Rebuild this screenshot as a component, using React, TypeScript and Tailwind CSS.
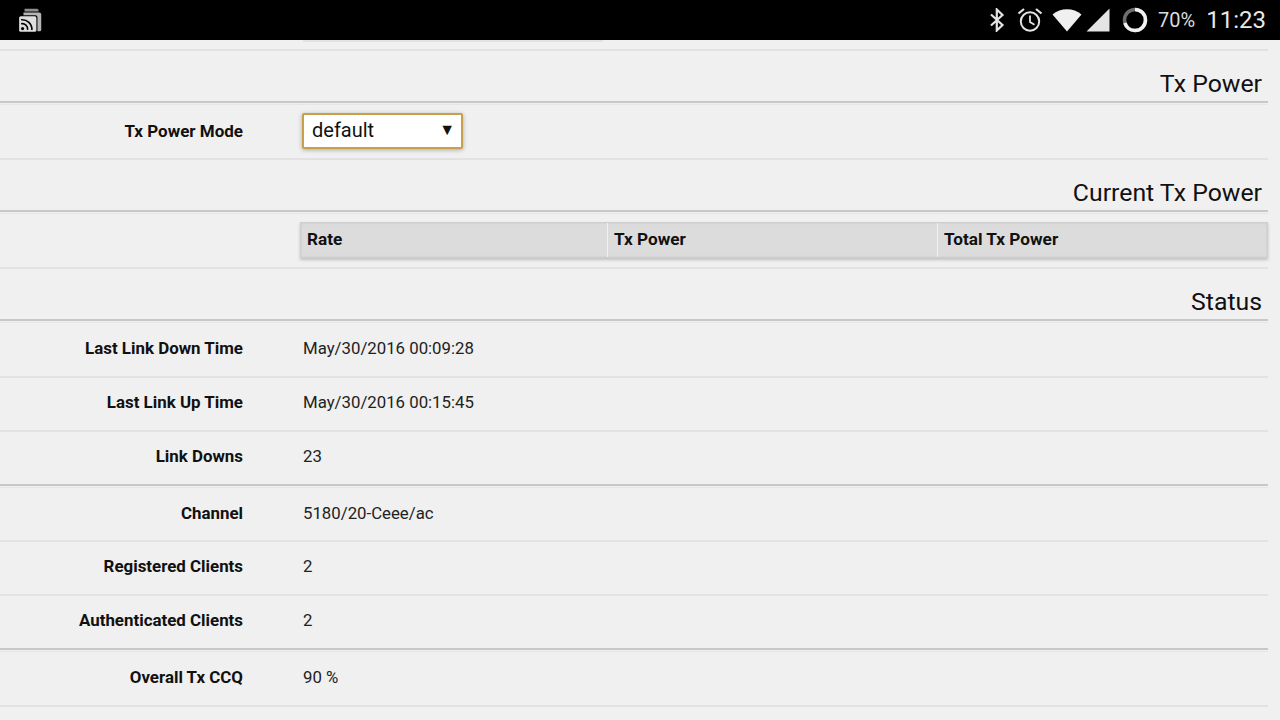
import React from "react";

function CastIcon() {
  return (
    <svg width="28" height="26" viewBox="0 0 26 24" className="block">
      <path d="M7 1.500h11.500a2 2 0 0 1 1.500 1V4h-13z" fill="#8f8f8f" />
      <path d="M6 5h14.500a2 2 0 0 1 2 2v14a1.500 1.500 0 0 1-1.500 1.500h-2V9.500a2 2 0 0 0-2-2H6z" fill="#b5b5b5" />
      <rect x="2" y="8.500" width="16" height="14.500" rx="1.500" fill="#dedede" />
      <circle cx="5.200" cy="20" r="1.500" fill="#000" />
      <path d="M3.800 15.500a5 5 0 0 1 6 5.700" fill="none" stroke="#000" strokeWidth="1.500" />
      <path d="M3.800 11.800a9 9 0 0 1 10 9.500" fill="none" stroke="#000" strokeWidth="1.500" />
    </svg>
  );
}

function BluetoothIcon() {
  return (
    <svg width="16" height="24" viewBox="0 0 16 24" className="block">
      <path d="M2 6.500 13.500 17 7.800 22.500V1.500L13.500 7 2 17.500" fill="none" stroke="#e4e4e4" strokeWidth="2.200" />
    </svg>
  );
}

function AlarmIcon() {
  return (
    <svg width="26" height="26" viewBox="0 0 26 26" className="block">
      <circle cx="13" cy="14.500" r="9.200" fill="none" stroke="#e4e4e4" strokeWidth="2" />
      <path d="M13 8.500v6.500l4.500 2.700" fill="none" stroke="#e4e4e4" strokeWidth="1.800" />
      <path d="M1.500 6.500 7 2M24.500 6.500 19 2" fill="none" stroke="#e4e4e4" strokeWidth="2.200" />
    </svg>
  );
}

function WifiIcon() {
  return (
    <svg width="30" height="24" viewBox="0 0 30 24" className="block">
      <path d="M0.500 6.500C8.500 -0.500 21.500 -0.500 29.500 6.500L15 23.500z" fill="#f0f0f0" />
    </svg>
  );
}

function SignalIcon() {
  return (
    <svg width="24" height="24" viewBox="0 0 24 24" className="block">
      <path d="M0.500 23.500 23.500 0.500V23.500z" fill="#e4e4e4" />
    </svg>
  );
}

function BatteryRing() {
  return (
    <svg width="26" height="26" viewBox="0 0 26 26" className="block">
      <circle cx="13" cy="13" r="10.500" fill="none" stroke="#6f6f6f" strokeWidth="3.500" />
      <circle
        cx="13"
        cy="13"
        r="10.500"
        fill="none"
        stroke="#f2f2f2"
        strokeWidth="3.500"
        strokeDasharray="46.200 65.970"
        transform="rotate(-90 13 13)"
      />
    </svg>
  );
}

function SectionTitle({ title, height }: { title: string; height: string }) {
  return (
    <div className={`${height} flex items-end justify-end pr-[6px] pb-[1px] border-b-2 border-[#c8c8c8] text-[24.8px] leading-[32px] text-[#111111]`}>
      {title}
    </div>
  );
}

function Divider() {
  return (
    <div className="pt-px">
      <div className="h-px bg-[#e6e6e6]" />
    </div>
  );
}

function Row({ label, value, height, strong }: { label: string; value: string; height: string; strong?: boolean }) {
  return (
    <div className={`${height} flex items-center border-b-2 ${strong ? "border-[#c8c8c8]" : "border-[#e2e2e2]"}`}>
      <div className="w-[243px] shrink-0 text-right font-bold text-[16.9px] text-[#111111]">{label}</div>
      <div className="ml-[60px] text-[16.8px] text-[#222222]">{value}</div>
    </div>
  );
}

export default function App() {
  return (
    <div className="w-[1280px] h-[720px] overflow-hidden bg-[#f0f0f0] font-['Roboto',sans-serif] text-[17px] leading-[24px]">
      <header className="h-10 bg-black flex items-center justify-between pl-[17px] pr-[14px] text-[#e8e8e8]">
        <CastIcon />
        <div className="flex items-center">
          <BluetoothIcon />
          <div className="ml-[12px]"><AlarmIcon /></div>
          <div className="ml-[9px]"><WifiIcon /></div>
          <div className="ml-[4px]"><SignalIcon /></div>
          <div className="ml-[12px]"><BatteryRing /></div>
          <span className="ml-[10px] text-[20px] leading-[28px] text-[#dcdcdc]">70%</span>
          <span className="ml-[11px] text-[24px] leading-[32px]">11:23</span>
        </div>
      </header>

      <main className="w-[1268px]">
        <div className="h-[11px] border-b-2 border-[#e2e2e2]">
          <div className="ml-[303px] w-[300px] h-[2px] bg-[#e2e2e2]" />
        </div>

        <SectionTitle title="Tx Power" height="h-[52px]" />
        <Divider />
        <div className="h-[55px] flex items-center pb-px border-b-2 border-[#e2e2e2]">
          <div className="w-[243px] shrink-0 text-right font-bold text-[#111111]">Tx Power Mode</div>
          <div className="ml-[59px] w-[161px] h-[36px] flex items-center justify-between pl-[8px] pr-[6px] bg-white border-2 border-[#c9a04a] rounded-[2px] shadow-[0_1px_4px_rgba(0,0,0,0.3)] text-[20px] text-[#111111]">
            <span className="pb-[2px]">default</span>
            <span className="pb-[2px] text-[16px] leading-none">▼</span>
          </div>
        </div>

        <SectionTitle title="Current Tx Power" height="h-[52px]" />
        <Divider />
        <div className="h-[55px] pl-[300px] pt-[8px] border-b-2 border-[#e2e2e2]">
          <div className="h-[36px] grid grid-cols-[306px_330px_330px] bg-[#dcdcdc] border border-[#cfcfcf] shadow-[0_2px_3px_rgba(0,0,0,0.2),inset_0_0_3px_rgba(0,0,0,0.08)] font-bold text-[17.2px] text-[#111111]">
            <div className="pl-[6px] pb-[2px] flex items-center">Rate</div>
            <div className="pl-[6px] pb-[2px] flex items-center border-l border-[#f0f0f0]">Tx Power</div>
            <div className="pl-[6px] pb-[2px] flex items-center border-l border-[#f0f0f0]">Total Tx Power</div>
          </div>
        </div>

        <SectionTitle title="Status" height="h-[52px]" />
        <Divider />
        <Row label="Last Link Down Time" value="May/30/2016 00:09:28" height="h-[55px] pb-[3px]" />
        <Row label="Last Link Up Time" value="May/30/2016 00:15:45" height="h-[54px] pb-[4px]" />
        <Row label="Link Downs" value="23" height="h-[54px] pb-[4px]" strong />
        <Divider />
        <Row label="Channel" value="5180/20-Ceee/ac" height="h-[54px] pb-[2px]" />
        <Row label="Registered Clients" value="2" height="h-[54px] pb-[4px]" />
        <Row label="Authenticated Clients" value="2" height="h-[54px] pb-[4px]" strong />
        <Divider />
        <Row label="Overall Tx CCQ" value="90 %" height="h-[55px] pb-[4px]" />
      </main>
    </div>
  );
}
